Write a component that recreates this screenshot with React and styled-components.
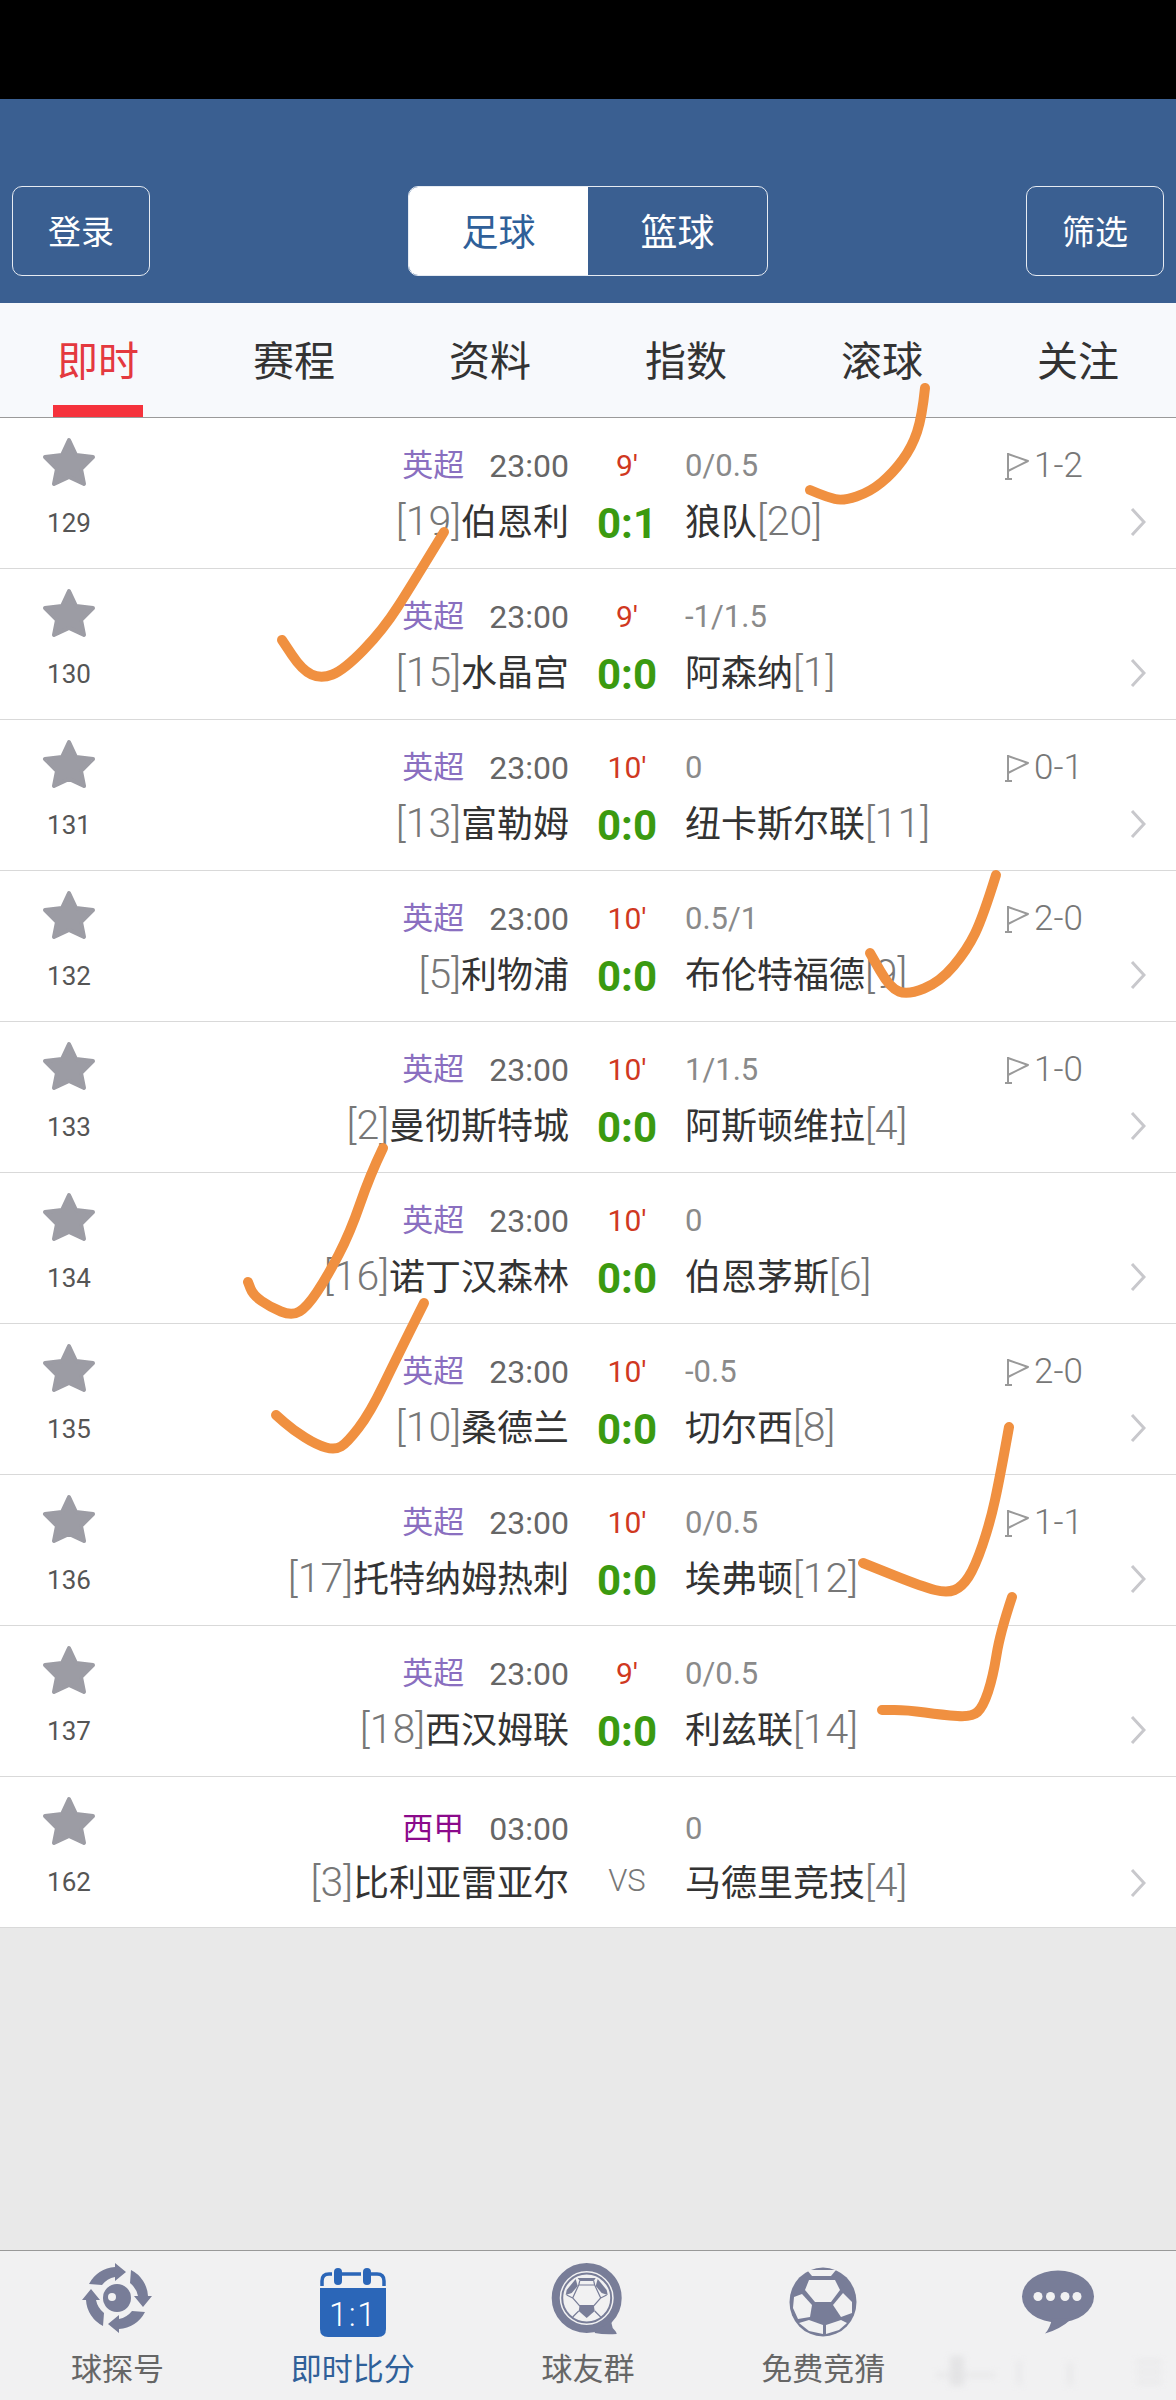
import React from 'react';
import styled, { createGlobalStyle } from 'styled-components';

const GlobalStyle = createGlobalStyle`
  html, body {
    margin: 0;
    padding: 0;
    background: #e9e9e9;
  }
  * {
    box-sizing: border-box;
  }
`;

const FONT = `Roboto, "Noto Sans CJK SC", sans-serif`;
const ICON_GREY = '#787d98';

const Page = styled.div`
  position: relative;
  width: 1176px;
  height: 2400px;
  display: flex;
  flex-direction: column;
  overflow: hidden;
  font-family: ${FONT};
  background: #e9e9e9;
`;

const StatusBar = styled.div`
  height: 99px;
  background: #000;
`;

const Header = styled.header`
  height: 204px;
  padding: 0 12px 27px 12px;
  display: flex;
  align-items: flex-end;
  justify-content: space-between;
  background: #3a5f91;
`;

const HeaderButton = styled.div`
  width: 138px;
  height: 90px;
  padding-bottom: 2px;
  display: flex;
  align-items: center;
  justify-content: center;
  border: 1.5px solid #e6ebf2;
  border-radius: 10px;
  color: #fff;
  font-size: 33px;
`;

const Segment = styled.div`
  width: 360px;
  height: 90px;
  display: flex;
  border: 1.5px solid #e6ebf2;
  border-radius: 10px;
  overflow: hidden;
`;

const SegmentItem = styled.div`
  flex: 1;
  padding-bottom: 2px;
  display: flex;
  align-items: center;
  justify-content: center;
  font-size: 37px;
  color: ${(p) => (p.$active ? '#2f6099' : '#fff')};
  background: ${(p) => (p.$active ? '#fff' : 'transparent')};
`;

const Tabs = styled.nav`
  height: 115px;
  display: grid;
  grid-template-columns: repeat(6, 196px);
  background: #f7f9fc;
  border-bottom: 1.5px solid #9a9a9a;
`;

const Tab = styled.div`
  position: relative;
  padding-bottom: 4px;
  display: flex;
  align-items: center;
  justify-content: center;
  font-size: 41px;
  color: ${(p) => (p.$active ? '#e4393f' : '#333')};

  &::after {
    content: '';
    display: ${(p) => (p.$active ? 'block' : 'none')};
    position: absolute;
    left: 53px;
    bottom: 0;
    width: 90px;
    height: 12px;
    background: #f5323c;
  }
`;

const MatchRow = styled.div`
  height: 151px;
  display: grid;
  grid-template-columns: 138px 1fr;
  background: #fff;
  border-bottom: 1.5px solid #d9d9d9;
`;

const Side = styled.div`
  display: flex;
  flex-direction: column;
  align-items: center;
  padding-top: 19px;
`;

const StarIcon = styled.svg`
  width: 54px;
  height: 50px;
  display: block;
`;

const MatchNumber = styled.div`
  margin-top: 20px;
  font-size: 26px;
  line-height: 32px;
  color: #555;
`;

const MatchBody = styled.div`
  display: grid;
  grid-template-columns: 431px 116px 319px 1fr;
  grid-template-rows: 44px 44px;
  row-gap: ${(p) => (p.$late ? '9px' : '11px')};
  padding-top: ${(p) => (p.$late ? '30px' : '26px')};
`;

const InfoLine = styled.div`
  display: flex;
  align-items: center;
  justify-content: flex-end;
  gap: 25px;
  font-size: 32px;
  line-height: 44px;
`;

const League = styled.span`
  font-size: 31px;
  color: ${(p) => p.$color};
`;

const KickOff = styled.span`
  color: #666;
`;

const Minute = styled.div`
  text-align: center;
  font-size: 30px;
  line-height: 44px;
  color: #d0391f;
`;

const Handicap = styled.div`
  font-size: 31px;
  line-height: 44px;
  color: #8a8a8a;
`;

const HalfScore = styled.div`
  display: flex;
  align-items: center;
  gap: 5px;
  font-size: 35px;
  font-weight: 300;
  line-height: 44px;
  color: #777;
`;

const FlagIcon = styled.svg`
  width: 25px;
  height: 28px;
  display: block;
`;

const HomeTeam = styled.div`
  text-align: right;
  font-size: 36px;
  line-height: 44px;
  color: #333;
  white-space: nowrap;
`;

const AwayTeam = styled.div`
  font-size: 36px;
  line-height: 44px;
  color: #333;
  white-space: nowrap;
`;

const Rank = styled.span`
  font-size: 41px;
  font-weight: 300;
  color: #777;
`;

const Score = styled.div`
  padding-top: 3px;
  text-align: center;
  font-size: 42px;
  font-weight: 700;
  line-height: 44px;
  color: #3b9a10;
`;

const Versus = styled.div`
  text-align: center;
  font-size: 31px;
  font-weight: 300;
  line-height: 42px;
  color: #777;
`;

const Chevron = styled.svg`
  width: 16px;
  height: 28px;
  margin: 9px 30px 0 0;
  justify-self: end;
  display: block;
`;

const Filler = styled.div`
  flex: 1;
  background: #e9e9e9;
`;

const BottomNav = styled.nav`
  height: 150px;
  display: grid;
  grid-template-columns: repeat(5, 1fr);
  background: #f1f1f2;
  border-top: 1.5px solid #999;
`;

const NavItem = styled.div`
  position: relative;
  display: flex;
  flex-direction: column;
  align-items: center;
  padding-top: 8px;
`;

const NavIcon = styled.svg`
  width: 80px;
  height: 80px;
  display: block;
`;

const NavLabel = styled.div`
  margin-top: 11px;
  font-size: 31px;
  line-height: 40px;
  color: ${(p) => (p.$active ? '#2f6099' : '#666')};
`;

const Watermark = styled.div`
  position: absolute;
  left: -5px;
  top: 103px;
  width: 229px;
  height: 36px;
  filter: blur(3px);
  opacity: 0.45;
  background:
    linear-gradient(#d4d4d6, #d4d4d6) 14px 2px / 14px 30px no-repeat,
    linear-gradient(#e0e0e2, #e0e0e2) 0 18px / 60px 6px no-repeat,
    linear-gradient(#e2e2e4, #e2e2e4) 80px 6px / 6px 26px no-repeat,
    linear-gradient(#e2e2e4, #e2e2e4) 130px 8px / 8px 24px no-repeat,
    linear-gradient(#dcdcde, #dcdcde) 200px 6px / 26px 4px no-repeat,
    linear-gradient(#dcdcde, #dcdcde) 200px 16px / 26px 4px no-repeat,
    linear-gradient(#dcdcde, #dcdcde) 200px 26px / 26px 4px no-repeat;
`;

const Scribbles = styled.svg`
  position: absolute;
  left: 0;
  top: 0;
  width: 1176px;
  height: 2400px;
  pointer-events: none;
`;

const matches = [
  { no: 129, homeRank: '[19]', home: '伯恩利', score: '0:1', away: '狼队', awayRank: '[20]', minute: "9'", line: '0/0.5', half: '1-2' },
  { no: 130, homeRank: '[15]', home: '水晶宫', score: '0:0', away: '阿森纳', awayRank: '[1]', minute: "9'", line: '-1/1.5' },
  { no: 131, homeRank: '[13]', home: '富勒姆', score: '0:0', away: '纽卡斯尔联', awayRank: '[11]', minute: "10'", line: '0', half: '0-1' },
  { no: 132, homeRank: '[5]', home: '利物浦', score: '0:0', away: '布伦特福德', awayRank: '[9]', minute: "10'", line: '0.5/1', half: '2-0' },
  { no: 133, homeRank: '[2]', home: '曼彻斯特城', score: '0:0', away: '阿斯顿维拉', awayRank: '[4]', minute: "10'", line: '1/1.5', half: '1-0' },
  { no: 134, homeRank: '[16]', home: '诺丁汉森林', score: '0:0', away: '伯恩茅斯', awayRank: '[6]', minute: "10'", line: '0' },
  { no: 135, homeRank: '[10]', home: '桑德兰', score: '0:0', away: '切尔西', awayRank: '[8]', minute: "10'", line: '-0.5', half: '2-0' },
  { no: 136, homeRank: '[17]', home: '托特纳姆热刺', score: '0:0', away: '埃弗顿', awayRank: '[12]', minute: "10'", line: '0/0.5', half: '1-1' },
  { no: 137, homeRank: '[18]', home: '西汉姆联', score: '0:0', away: '利兹联', awayRank: '[14]', minute: "9'", line: '0/0.5' },
  { no: 162, homeRank: '[3]', home: '比利亚雷亚尔', away: '马德里竞技', awayRank: '[4]', line: '0', league: '西甲', time: '03:00' },
];

// hand drawn ticks on top of the screenshot, page coordinates
const strokes = [
  [[925, 388], [922, 417], [912, 447], [893, 473], [870, 492], [843, 501], [827, 497], [810, 490]],
  [[444, 532], [413, 583], [383, 630], [344, 670], [321, 679], [302, 670], [282, 640]],
  [[996, 875], [983, 917], [967, 950], [940, 982], [908, 995], [890, 988], [870, 953]],
  [[383, 1148], [370, 1175], [350, 1233], [327, 1277], [307, 1307], [292, 1316], [270, 1307], [253, 1295], [248, 1282]],
  [[424, 1303], [397, 1357], [370, 1413], [347, 1443], [335, 1450], [317, 1445], [293, 1430], [276, 1415]],
  [[1009, 1427], [1000, 1477], [990, 1523], [975, 1567], [962, 1587], [947, 1593], [923, 1587], [863, 1563]],
  [[1012, 1597], [1000, 1633], [993, 1677], [983, 1707], [972, 1717], [943, 1715], [907, 1710], [882, 1710]],
];

function strokePath(points) {
  let d = `M${points[0][0]} ${points[0][1]}`;
  for (let i = 1; i < points.length - 1; i++) {
    const midX = (points[i][0] + points[i + 1][0]) / 2;
    const midY = (points[i][1] + points[i + 1][1]) / 2;
    d += ` Q${points[i][0]} ${points[i][1]} ${midX} ${midY}`;
  }
  const last = points[points.length - 1];
  return `${d} L${last[0]} ${last[1]}`;
}

function Star() {
  return (
    <StarIcon viewBox="0 0 54 50">
      <path
        d="M27 3 L34 18 L51 20 L39 32 L42 47 L27 40 L12 47 L15 32 L3 20 L20 18 Z"
        fill="#9c9ca4"
        stroke="#9c9ca4"
        strokeWidth="4"
        strokeLinejoin="round"
      />
    </StarIcon>
  );
}

function Flag() {
  return (
    <FlagIcon viewBox="0 0 25 28" fill="none" stroke="#999" strokeWidth="2">
      <path d="M4 1 V27 M1 27 H8" />
      <path d="M4 2 L24 9 L4 19" strokeLinejoin="round" />
    </FlagIcon>
  );
}

function Arrow() {
  return (
    <Chevron viewBox="0 0 16 28" fill="none" stroke="#c8c8cc" strokeWidth="3">
      <path d="M2 1 L14 14 L2 27" />
    </Chevron>
  );
}

function ScoutIcon() {
  return (
    <NavIcon viewBox="0 0 80 80">
      <g transform="translate(39 39)" fill={ICON_GREY}>
        {[0, 90, 180, 270].map((angle) => (
          <path
            key={angle}
            transform={`rotate(${angle})`}
            d="M-28 -14 A31 31 0 0 1 -2 -31 L-2 -35 L9 -26 L-2 -17 L-2 -21 A22 22 0 0 0 -15 -13 Z"
          />
        ))}
        <circle r="14" />
        <circle cx="-5" cy="-1" r="4" fill="#f1f1f2" />
      </g>
    </NavIcon>
  );
}

function ScoreIcon() {
  return (
    <NavIcon viewBox="0 0 80 80">
      <path d="M9 27 V22 Q9 15 16 15 H19 M29 15 H48 M58 15 H64 Q71 15 71 22 V27" fill="none" stroke="#2b66b8" strokeWidth="3.5" />
      <rect x="21" y="9" width="8" height="17" rx="4" fill="#2b66b8" />
      <rect x="50" y="9" width="8" height="17" rx="4" fill="#2b66b8" />
      <path d="M7 29 H73 V70 Q73 78 65 78 H15 Q7 78 7 70 Z" fill="#2b66b8" />
      <text x="40" y="67" textAnchor="middle" fill="#fff" fontFamily="Roboto, sans-serif" fontSize="33" fontWeight="300" letterSpacing="1.5">1:1</text>
    </NavIcon>
  );
}

const ballPanels = [
  '-14,-22 12,-22 17,-12 8,0 -8,0 -18,-12',
  '-21,-8 -11,3 -13,15 -25,17 -30,6 -29,-5',
  '20,-9 29,0 29,11 18,15 10,3',
  '-14,18 0,23 0,32 -14,29 -24,21',
  '3,23 18,18 24,21 16,28 3,32',
  '-16,-32 13,-32 8,-26 -11,-26',
];

function GroupIcon() {
  return (
    <NavIcon viewBox="0 0 80 80">
      <g transform="translate(38.7 39)" fill={ICON_GREY}>
        <circle r="31" fill="none" stroke={ICON_GREY} strokeWidth="8" />
        <path d="M8 31 Q18 30 24 22 L26 30 Q30 34 30 36 Q18 37 8 35 Z" />
        <circle r="24.5" fill="none" stroke={ICON_GREY} strokeWidth="2" />
        <polygon points="-7,8 7,8 8,14 0,21 -8,14" transform="translate(0 -1)" />
        <polygon points="-20,-8 -11,-19 -9,-12 -15,-5 -21,-3" />
        <polygon points="20,-8 11,-19 9,-12 15,-5 21,-3" />
        <polygon points="-9,-20 9,-20 7,-17 -7,-17" />
        <path d="M-8 -13 H8 L14 0 L7 8 H-7 L-14 0 Z M-14 0 L-20 -3 M14 0 L20 -3 M-8 -13 L-7 -17 M8 -13 L7 -17 M-8 13 L-14 19 M8 13 L14 19" fill="none" stroke={ICON_GREY} strokeWidth="1.2" />
      </g>
    </NavIcon>
  );
}

function BallIcon() {
  return (
    <NavIcon viewBox="0 0 80 80">
      <g transform="translate(40 43)">
        <ellipse rx="33.5" ry="34.5" fill={ICON_GREY} />
        {ballPanels.map((points) => (
          <polygon key={points} points={points} fill="#f1f1f2" />
        ))}
      </g>
    </NavIcon>
  );
}

function ChatIcon() {
  return (
    <NavIcon viewBox="0 0 80 80">
      <g transform="translate(40 37.5)">
        <ellipse rx="36" ry="26" fill={ICON_GREY} />
        <path d="M-6 22 Q-8 32 -13 37 Q2 33 14 22 Z" fill={ICON_GREY} />
        {[-20, -7.5, 7, 19].map((cx) => (
          <circle key={cx} cx={cx} cy="0" r="4.5" fill="#f1f1f2" />
        ))}
      </g>
    </NavIcon>
  );
}

function Match({ match }) {
  const late = match.no === 162;
  return (
    <MatchRow>
      <Side>
        <Star />
        <MatchNumber>{match.no}</MatchNumber>
      </Side>
      <MatchBody $late={late}>
        <InfoLine>
          <League $color={late ? '#8b0a8b' : '#8a6fc0'}>{match.league || '英超'}</League>
          <KickOff>{match.time || '23:00'}</KickOff>
        </InfoLine>
        <Minute>{match.minute}</Minute>
        <Handicap>{match.line}</Handicap>
        {match.half ? (
          <HalfScore>
            <Flag />
            {match.half}
          </HalfScore>
        ) : (
          <div />
        )}
        <HomeTeam>
          <Rank>{match.homeRank}</Rank>
          {match.home}
        </HomeTeam>
        {match.score ? <Score>{match.score}</Score> : <Versus>VS</Versus>}
        <AwayTeam>
          {match.away}
          <Rank>{match.awayRank}</Rank>
        </AwayTeam>
        <Arrow />
      </MatchBody>
    </MatchRow>
  );
}

export default function App() {
  return (
    <Page>
      <GlobalStyle />
      <StatusBar />
      <Header>
        <HeaderButton>登录</HeaderButton>
        <Segment>
          <SegmentItem $active>足球</SegmentItem>
          <SegmentItem>篮球</SegmentItem>
        </Segment>
        <HeaderButton>筛选</HeaderButton>
      </Header>
      <Tabs>
        <Tab $active>即时</Tab>
        <Tab>赛程</Tab>
        <Tab>资料</Tab>
        <Tab>指数</Tab>
        <Tab>滚球</Tab>
        <Tab>关注</Tab>
      </Tabs>
      {matches.map((match) => (
        <Match key={match.no} match={match} />
      ))}
      <Filler />
      <BottomNav>
        <NavItem>
          <ScoutIcon />
          <NavLabel>球探号</NavLabel>
        </NavItem>
        <NavItem>
          <ScoreIcon />
          <NavLabel $active>即时比分</NavLabel>
        </NavItem>
        <NavItem>
          <GroupIcon />
          <NavLabel>球友群</NavLabel>
        </NavItem>
        <NavItem>
          <BallIcon />
          <NavLabel>免费竞猜</NavLabel>
        </NavItem>
        <NavItem>
          <ChatIcon />
          <Watermark />
        </NavItem>
      </BottomNav>
      <Scribbles viewBox="0 0 1176 2400" fill="none" stroke="#f09040" strokeWidth="10" strokeLinecap="round" strokeLinejoin="round">
        {strokes.map((points) => (
          <path key={points[0].join()} d={strokePath(points)} />
        ))}
      </Scribbles>
    </Page>
  );
}
